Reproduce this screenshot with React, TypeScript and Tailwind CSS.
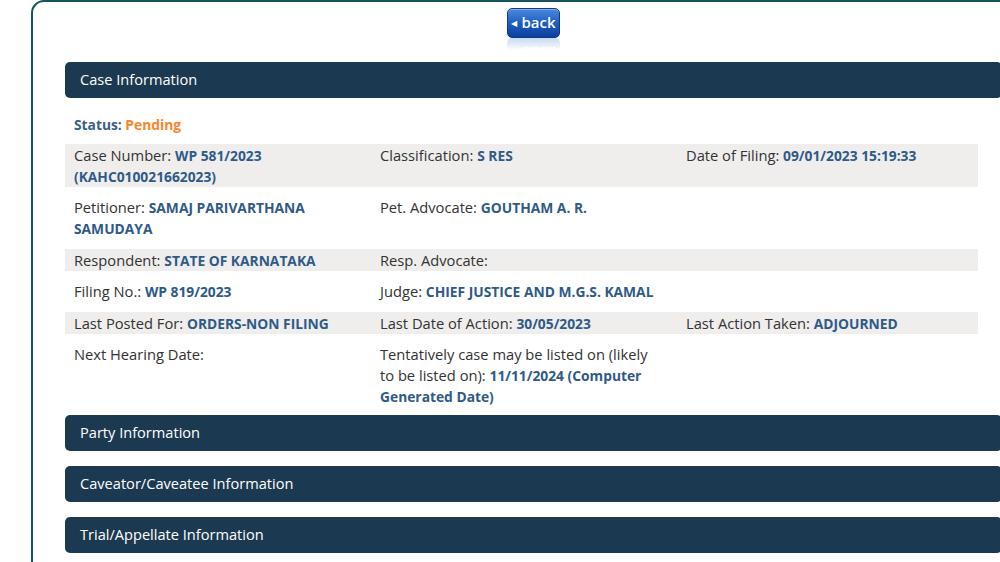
import React from 'react';

type Cell = { label: string; value?: string };

const ROWS: { cells: Cell[]; shaded: boolean }[] = [
  {
    shaded: true,
    cells: [
      { label: 'Case Number:', value: 'WP 581/2023 (KAHC010021662023)' },
      { label: 'Classification:', value: 'S RES' },
      { label: 'Date of Filing:', value: '09/01/2023 15:19:33' },
    ],
  },
  {
    shaded: false,
    cells: [
      { label: 'Petitioner:', value: 'SAMAJ PARIVARTHANA SAMUDAYA' },
      { label: 'Pet. Advocate:', value: 'GOUTHAM A. R.' },
      { label: '' },
    ],
  },
  {
    shaded: true,
    cells: [
      { label: 'Respondent:', value: 'STATE OF KARNATAKA' },
      { label: 'Resp. Advocate:' },
      { label: '' },
    ],
  },
  {
    shaded: false,
    cells: [
      { label: 'Filing No.:', value: 'WP 819/2023' },
      { label: 'Judge:', value: 'CHIEF JUSTICE AND M.G.S. KAMAL' },
      { label: '' },
    ],
  },
  {
    shaded: true,
    cells: [
      { label: 'Last Posted For:', value: 'ORDERS-NON FILING' },
      { label: 'Last Date of Action:', value: '30/05/2023' },
      { label: 'Last Action Taken:', value: 'ADJOURNED' },
    ],
  },
  {
    shaded: false,
    cells: [
      { label: 'Next Hearing Date:' },
      {
        label: 'Tentatively case may be listed on (likely to be listed on):',
        value: '11/11/2024 (Computer Generated Date)',
      },
      { label: '' },
    ],
  },
];

function SectionBar({ title, className }: { title: string; className?: string }) {
  return (
    <div
      className={
        'h-[36px] flex items-center pl-[15px] rounded-[5px] bg-[#1b3a52] text-white text-[14.6px] ' +
        (className ?? '')
      }
    >
      {title}
    </div>
  );
}

function BackButton() {
  return (
    <div className="flex flex-col items-center">
      <div className="w-[53px] h-[30px] rounded-[5px] bg-gradient-to-b from-[#4a88dc] via-[#1f5fc2] to-[#0c3f9c] border border-[#0d3a86] flex items-center justify-center gap-[4px] text-white leading-none shadow-[inset_0_1px_0_rgba(255,255,255,0.35)]">
        <span className="text-[8px]">◀</span>
        <span className="-mt-[2px] text-[15px] font-semibold">back</span>
      </div>
      <div className="w-[53px] h-[12px] overflow-hidden opacity-30 [mask-image:linear-gradient(to_bottom,black,transparent)]">
        <div className="w-[53px] h-[30px] rounded-[5px] bg-gradient-to-t from-[#4a88dc] to-[#0c3f9c] flex items-center justify-center gap-[4px] text-white leading-none -scale-y-100 origin-top translate-y-[30px]">
          <span className="text-[8px]">◀</span>
          <span className="text-[15px] font-semibold">back</span>
        </div>
      </div>
    </div>
  );
}

export default function App() {
  return (
    <div className="w-[1000px] h-[562px] overflow-hidden bg-white font-['Open_Sans',sans-serif] text-[#333]">
      <div className="ml-[31px] w-[1005px] min-h-[600px] border-2 border-[#14525c] rounded-tl-[13px] rounded-tr-[13px] pt-[6px] pl-[32px] pr-[32px]">
        <BackButton />

        <SectionBar title="Case Information" className="mt-[12px]" />

        <p className="mt-[16px] mb-[8px] pl-[9px] text-[13.8px] leading-[21.5px] font-bold text-[#3b5f86]">
          Status: <span className="text-[#f7862b]">Pending</span>
        </p>

        <div className="w-[913px] text-[14.7px] leading-[21px]">
          {ROWS.map((row, i) => (
            <div
              key={i}
              className={
                row.shaded
                  ? 'grid grid-cols-[306px_306px_1fr] bg-[#efeeed] pt-[1px]'
                  : i === ROWS.length - 1
                    ? 'grid grid-cols-[306px_306px_1fr] pt-[10px]'
                    : 'grid grid-cols-[306px_306px_1fr] py-[10px]'
              }
            >
              {row.cells.map((c, j) => (
                <div key={j} className="pl-[9px] pr-[22px]">
                  {c.label}
                  {c.value && (
                    <>
                      {' '}
                      <span className="text-[13.8px] font-bold text-[#2f5a88]">{c.value}</span>
                    </>
                  )}
                </div>
              ))}
            </div>
          ))}
        </div>

        <SectionBar title="Party Information" className="mt-[8px]" />
        <SectionBar title="Caveator/Caveatee Information" className="mt-[15px]" />
        <SectionBar title="Trial/Appellate Information" className="mt-[15px]" />
      </div>
    </div>
  );
}
